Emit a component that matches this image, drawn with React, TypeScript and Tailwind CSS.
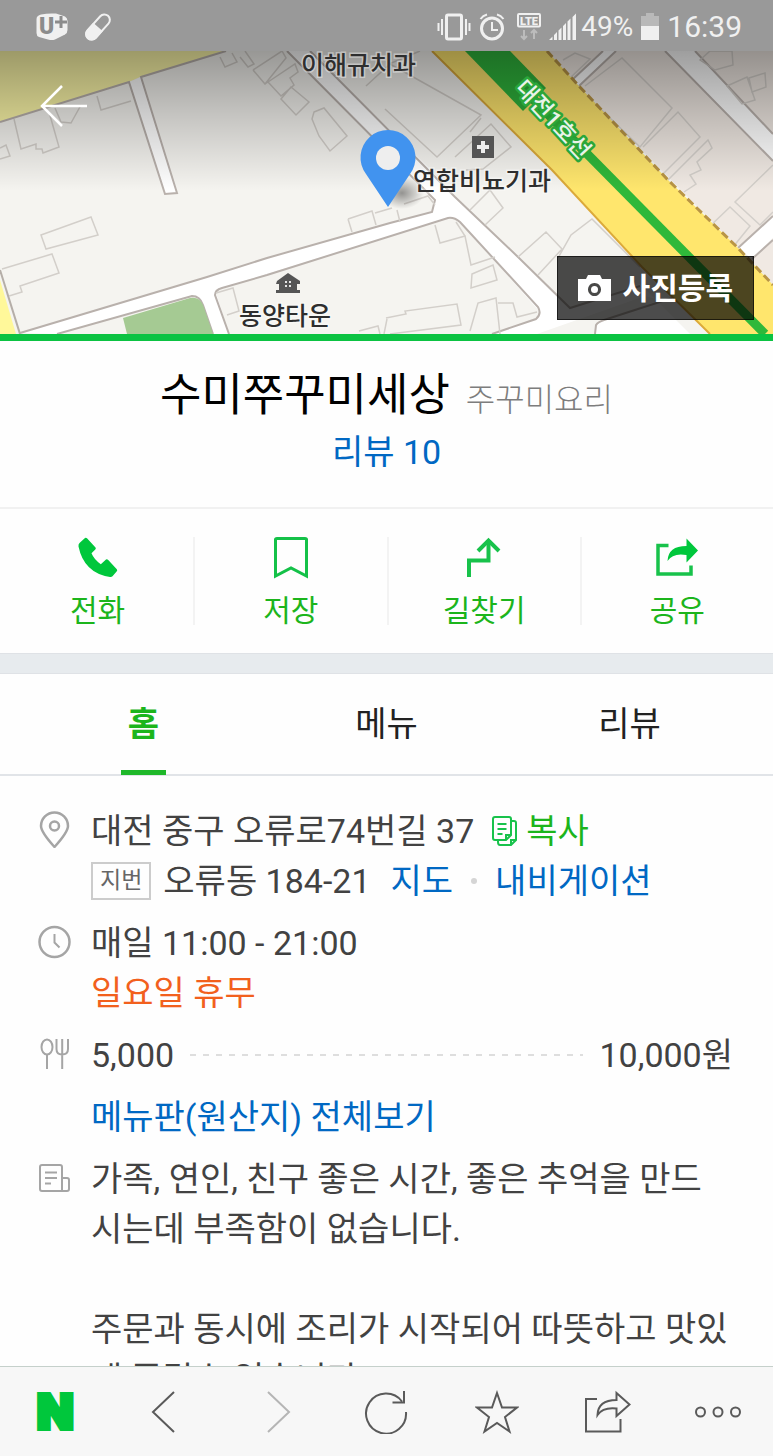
import { useState } from "react";

const actions = [
    { label: "전화", icon: <PhoneIcon /> },
    { label: "저장", icon: <BookmarkIcon /> },
    { label: "길찾기", icon: <RouteIcon /> },
    { label: "공유", icon: <ShareIcon /> },
]

const tabs = ["홈", "메뉴", "리뷰"]

function PhoneIcon() {
    return (
        <svg width="42" height="42" viewBox="0 0 42 42" fill="#00c73c" aria-hidden="true">
            <path d="M2.500 6 L8 1 Q9 .2 10 1.200 L18.500 10.500 Q19.300 11.500 18.300 12.500 L14.500 16.300 Q17 22.500 23.800 27.200 L29 22.600 Q30 21.800 31 22.800 L39.800 32.200 Q40.700 33.200 39.800 34.200 L35.500 39.300 Q34.500 40.300 33 40 Q7 36 1.500 9.500 Q1.200 7 2.500 6Z" />
        </svg>
    )
}

function BookmarkIcon() {
    return (
        <svg width="42" height="44" viewBox="0 0 42 44" fill="none" stroke="#14c148" strokeWidth="3" aria-hidden="true">
            <path d="M5.500 39 V2.500 Q5.500 1.500 7 1.500 H35 Q36.500 1.500 36.500 2.500 V39 L21 31Z" />
        </svg>
    )
}

function RouteIcon() {
    return (
        <svg width="42" height="42" viewBox="0 0 42 42" fill="none" stroke="#18c24b" strokeWidth="4" aria-hidden="true">
            <path d="M6 40 V23.500 H25.500 V3" />
            <path d="M15 14 L25.500 3.500 L36 14" />
        </svg>
    )
}

function ShareIcon() {
    return (
        <svg width="44" height="42" viewBox="0 0 44 42" fill="none" aria-hidden="true">
            <path d="M13.500 8.500 H3 V37 H36 V28.500" stroke="#18c24b" strokeWidth="3.500" />
            <path d="M12.500 24 Q13 9 31.500 9 V1.500 L43 13.500 L31.500 25.500 V18 Q18 15.500 12.500 24Z" fill="#00c73c" />
        </svg>
    )
}

function StatusBar() {
    return (
        <header className="flex h-[51px] shrink-0 items-center justify-between bg-[#999] pl-9 pr-[31px] pt-0.5 text-[#f0f0f0]">
            <div className="flex items-center gap-4">
                <svg width="32" height="28" viewBox="0 0 32 28" aria-hidden="true">
                    <path d="M5 1.500 Q12 0 20 .5 L29 3.500 Q31.500 5 31.500 8 V17 Q31.500 20 29 21.500 L19 26.500 Q16 27.500 12 26.500 L3 24 Q.5 23 .5 20 V6 Q.5 2.500 5 1.500Z" fill="#f0f0f0" />
                    <text x="3" y="21" fontSize="23" fontWeight="900" fill="#8c8c8c" fontFamily="Roboto">U</text>
                    <path d="M25 3 V15 M19 9 H31" stroke="#8c8c8c" strokeWidth="3" />
                </svg>
                <svg width="28" height="28" viewBox="0 0 28 28" aria-hidden="true">
                    <g transform="rotate(42 14 14)">
                        <rect x="8.500" y="-1" width="11" height="30" rx="5.500" fill="none" stroke="#f0f0f0" strokeWidth="2" />
                        <path d="M7.500 14 H20.500 V23.500 A6.500 6.500 0 0 1 7.500 23.500Z" fill="#f0f0f0" />
                    </g>
                </svg>
            </div>
            <div className="flex items-center">
                <svg width="34" height="28" viewBox="0 0 34 28" fill="none" stroke="#f0f0f0" aria-hidden="true">
                    <rect x="9.500" y="2" width="15" height="24" rx="1.500" strokeWidth="3" />
                    <path d="M1.500 10 V18 M5 6 V22 M29 6 V22 M32.500 10 V18" strokeWidth="2" />
                </svg>
                <svg className="ml-2" width="26" height="28" viewBox="0 0 26 28" fill="none" stroke="#f0f0f0" strokeWidth="3" aria-hidden="true">
                    <circle cx="13" cy="15.500" r="10.500" />
                    <path d="M13 9 V17 H19" strokeWidth="2" />
                    <path d="M1.500 6 Q4 2.500 8 1.500 M18 1.500 Q22 2.500 24.500 6" strokeWidth="2" />
                </svg>
                <svg className="ml-3" width="24" height="28" viewBox="0 0 24 28" aria-hidden="true">
                    <rect x="1" y="1" width="22" height="12.500" rx="1" fill="none" stroke="#f0f0f0" strokeWidth="2" />
                    <text x="12" y="11.500" textAnchor="middle" fontSize="11" fontWeight="900" fill="#f0f0f0" fontFamily="Roboto">LTE</text>
                    <path d="M7 17 V26 M4 23 L7 26 L10 23 M17 26 V17 M14 20 L17 17 L20 20" stroke="#bcbcbc" strokeWidth="2" fill="none" />
                </svg>
                <svg className="ml-2" width="28" height="28" viewBox="0 0 28 28" fill="#f0f0f0" aria-hidden="true">
                    <path d="M0 27 L3.500 23.500 V27Z M5 22 L8 19 V27 H5Z M9.500 17.500 L12.500 14.500 V27 H9.500Z M14 13 L17 10 V27 H14Z M18.500 8.500 L21.500 5.500 V27 H18.500Z M23.500 4 L27 .5 V27 H23.500Z" />
                </svg>
                <span className="ml-1 text-[28px] leading-8">49%</span>
                <svg className="ml-2" width="18" height="28" viewBox="0 0 18 28" aria-hidden="true">
                    <path d="M5 0 H13 V3 H18 V14 H0 V3 H5Z" fill="#b9b9b9" />
                    <path d="M0 13 H18 V27 H0Z" fill="#f0f0f0" />
                </svg>
                <span className="ml-2 text-[30px] leading-8">16:39</span>
            </div>
        </header>
    )
}

// viewBox starts at 51 so the shapes share the page's coordinates
function MapView() {
    return (
        <div className="relative h-[290px] shrink-0 overflow-hidden border-b-[7px] border-[#0bc342]">
            <svg className="h-full w-full" viewBox="0 51 773 283" preserveAspectRatio="xMidYMid slice" role="img" aria-label="지도">
                <defs>
                    <linearGradient id="shade" x1="0" y1="0" x2="0" y2="1">
                        <stop offset="0" stopColor="#000" stopOpacity="0.38" />
                        <stop offset="0.45" stopColor="#000" stopOpacity="0.2" />
                        <stop offset="1" stopColor="#000" stopOpacity="0" />
                    </linearGradient>
                    <radialGradient id="pinShadow">
                        <stop offset="0" stopColor="#000" stopOpacity="0.4" />
                        <stop offset="1" stopColor="#000" stopOpacity="0" />
                    </radialGradient>
                </defs>
                <rect y="51" width="773" height="283" fill="#f5f4f0" />
                <path d="M547 51 H773 V285 L738 248 L578 85Z" fill="#f0e9e3" />
                <path d="M0 51 H224 L140 77 L129 82 L0 122Z" fill="#fdf8a8" />
                <path d="M0 280 L16 334 H0Z" fill="#fff89a" />
                <path d="M0 270 L20 334" stroke="#b5aea8" strokeWidth="2" />

                {/* roads */}
                <g fill="#fff">
                    <path d="M20 333 L207 277 L267 258 L390 223 L432 212 L435 202 L287 51 H310 L428 167 L455 197 L518 257 L570 308 L640 284 L690 334 H595 L598 323 L660 300 L645 296 L537 334 H492 L537 318 L540 312 L458 220 L448 218 L215 290 L229 334 H213 L200 298 L192 296 L57 334Z" />
                    <path d="M129 82 L141 77 L177 193 L165 194Z" />
                    <path d="M572 80 L603 51 H616 L579 86Z M665 51 L773 161 V134 L695 51Z M738 248 L773 216 V238 L752 259Z" />
                </g>
                <g fill="none" stroke="#b9b1ac" strokeWidth="2">
                    <path d="M0 122 L129 82 L165 194 L177 193 L141 77 L226 51" />
                    <path d="M20 333 L207 277 L267 258 L390 223 L432 212 L435 200 L287 51" />
                    <path d="M310 51 L455 197 L518 257 L570 308 L640 286" />
                    <path d="M57 334 L192 296 Q200 296 203 305 L213 334 M229 334 L215 295 Q215 290 222 288 L267 275 L448 218 Q454 217 460 222 L538 307 Q542 314 536 319 L492 334" />
                    <path d="M595 334 L596 325 Q598 322 604 320 L672 298" />
                    <path d="M572 80 L603 51 M579 86 L616 51 M665 51 L773 161 M695 51 L773 134 M738 248 L773 216 M752 259 L773 240" />
                </g>
                <path d="M123 318 L190 298 Q199 296 203 305 L213 334 H127Z" fill="#a5ca93" />

                {/* building outlines */}
                <g fill="none" stroke="#d3cfca" strokeWidth="1.500">
                    <path d="M97 96 L101 110 L131 101 M55 108 L61 122 L71 123 L81 105 M14 119 L21 149 L36 144 L36 149 L42 149 L43 153 L59 147 L49 112 M0 148 L6 145 L10 156 L0 159" />
                    <path d="M41 235 L91 217 L98 235 L46 249Z M2 269 L52 254 L59 273 L20 286 L22 292 L9 296" />
                    <path d="M220 57 L225 67 L237 62 L232 53 M240 57 L248 67 L254 64 L245 51 M253 70 L282 51 M253 70 L265 84 L286 58 L282 51 M265 84 L295 64 L298 72 L290 78 L294 85 L281 96 L268 82 M281 99 L291 87 L309 102 L296 115Z M314 112 L324 108 L347 136 L330 151 L319 136 L312 119Z" />
                    <path d="M348 219 L372 211 L376 225 M348 219 L352 232 M375 213 L392 208 M404 204 L428 196 L435 205 M397 210 L400 222" />
                    <path d="M366 86 L390 64 L481 115 L437 157 L385 109 M389 64 L420 51 M455 157 L491 124 L511 147 L483 169 L466 170 M481 118 L470 132 M470 210 L490 190 L503 208 L485 225" />
                    <path d="M435 225 L440 243 L465 236 L456 222 M465 236 L471 265 L495 257 M472 274 L493 265 L497 280 L471 288Z M386 318 L406 314 L405 311 L457 304 L461 325 L390 334 M470 331 L478 303 L496 298 L500 334 M498 303 L513 303 L517 317 L537 312 M518 257 L546 232 L562 249 L538 275 M558 258 L571 235 L592 219 L640 267" />
                    <path d="M216 293 L233 288 L239 311 L227 315 M359 331 L378 326 L380 334 M384 334 L387 319" />
                    <path d="M585 86 L622 58 L672 108 L640 147 L583 92 M643 147 L678 112 L700 137 L662 175 M668 180 L708 140 L712 148 L697 162 L701 170 L690 175 L696 184 L684 192 M563 60 L575 53 L590 59 L570 78 M700 60 L710 51 L732 51 L733 65 L715 70Z M727 86 L747 77 L755 100 L742 104Z M749 78 L765 73 L766 87 L752 92Z M773 165 L735 202 L760 225 L773 212 M708 228 L730 207 L750 226 L733 247 M715 235 L735 250" />
                </g>

                {/* subway road */}
                <path d="M432 51 H547 L578 85 L668 180 L738 248 L773 285 V334 H710 L642 267 L552 170Z" fill="#ffe66d" />
                <path d="M432 51 L552 170 L642 267 L710 334" fill="none" stroke="#dcaa3a" strokeWidth="2" />
                <path d="M547 51 L578 85 L668 180 L738 248 L773 285" fill="none" stroke="#b99545" strokeWidth="3" strokeDasharray="8 4" />
                <path d="M465 51 H510 L546 88 L523 111Z" fill="#2fb53c" />
                <path d="M530 96 L765 334" stroke="#2fb83a" strokeWidth="9" />

                <rect y="51" width="773" height="140" fill="url(#shade)" />

                <text transform="translate(514 89) rotate(47)" fontSize="23" fontWeight="500" fill="#e9f3e9" stroke="#2aa63a" strokeWidth="5" paintOrder="stroke" strokeLinejoin="round">대전1호선</text>

                <ellipse cx="402" cy="193" rx="22" ry="16" fill="url(#pinShadow)" />
                <path d="M388 207 L366 174 A27.500 27.500 0 1 1 410 174Z" fill="#4193ef" />
                <circle cx="388" cy="158" r="12" fill="#eee" />

                <g fill="#555">
                    <rect x="472" y="136" width="22" height="22" />
                    <path d="M277 281 L288 273 L300 281 V284 H297 V290 H300 V293 H276 V290 H279 V284 H276Z" />
                </g>
                <path d="M483 141 V153 M477 147 H489" stroke="#eee" strokeWidth="4" />
                <path d="M285 281 H287 V283 H285Z M289 281 H291 V283 H289Z M285 285 H287 V287 H285Z M289 285 H291 V287 H289Z" fill="#e4e4e4" />

                <g fontSize="25" fontWeight="500" fill="#2e2e2e" stroke="#fff" strokeOpacity="0.4" strokeWidth="3" paintOrder="stroke">
                    <text x="301" y="74">이해규치과</text>
                    <text x="413" y="190">연합비뇨기과</text>
                    <text x="239" y="325">동양타운</text>
                </g>
            </svg>
            <button type="button" aria-label="뒤로" className="absolute left-10 top-8">
                <svg width="48" height="44" viewBox="0 0 48 44" fill="none" stroke="#fff" strokeWidth="2.500">
                    <path d="M22 3 L2 23 L22 43 M2 23 H47" />
                </svg>
            </button>
            <button type="button" className="absolute bottom-3.5 right-[19px] flex h-16 items-center gap-3 border border-black/60 bg-black/70 px-5 text-[30px] font-bold text-white">
                <svg width="33" height="28" viewBox="0 0 33 28" fill="#fff" aria-hidden="true">
                    <path fillRule="evenodd" d="M0 5 H8 L10 1 H22 L24 5 H33 V27 H0Z M16.500 9 a6.500 6.500 0 1 0 .01 0Z" />
                    <circle cx="16.500" cy="15.500" r="3.500" />
                </svg>
                사진등록
            </button>
        </div>
    )
}

function Details() {
    return (
        <section className="flex flex-col gap-3 pl-[38px] pr-10 pt-[30px] text-[34px] leading-[50px] text-[#424242]">
            <div className="flex gap-5">
                <svg className="mt-0.5 shrink-0" width="33" height="40" viewBox="0 0 33 40" fill="none" stroke="#a5a5a5" strokeWidth="2.500" aria-hidden="true">
                    <path d="M16.500 39 Q3 24 3 18 A13.500 13.500 0 0 1 30 18 Q30 24 16.500 39Z" />
                    <circle cx="16.500" cy="18" r="4.500" />
                </svg>
                <address className="not-italic">
                    <p className="flex items-center">
                        대전 중구 오류로74번길 37
                        <button type="button" className="ml-[18px] flex items-center gap-2 text-[#1cb51c]">
                            <svg width="26" height="32" viewBox="0 0 26 32" fill="none" stroke="#18c24b" strokeWidth="2" aria-hidden="true">
                                <path d="M3 2 H17 Q19 2 19 4 V20 L14 25 H3 Q1 25 1 23 V4 Q1 2 3 2Z M14 25 V20 H19" />
                                <path d="M19 6 H22 Q24 6 24 8 V25 L19 30 H8 Q6 30 6 27 V25 M19 30 V25 H24" />
                                <path d="M5.500 9 H14.500 M5.500 14 H14.500 M5.500 19 H10.500" />
                            </svg>
                            복사
                        </button>
                    </p>
                    <p className="flex items-center">
                        <span className="mr-3 border-2 border-[#ccc] px-[7px] text-[23px] leading-[34px] text-[#666]">지번</span>
                        오류동 184-21
                        <a href="#map" className="ml-5 text-[#0068c3]">지도</a>
                        <span className="mx-[18px] h-1.5 w-1.5 rounded-full bg-[#d5d5d5]" />
                        <a href="#navi" className="text-[#0068c3]">내비게이션</a>
                    </p>
                </address>
            </div>

            <div className="flex gap-5">
                <svg className="mt-[7px] shrink-0" width="33" height="34" viewBox="0 0 33 34" fill="none" stroke="#a5a5a5" strokeWidth="2.500" aria-hidden="true">
                    <circle cx="16.500" cy="17" r="15" />
                    <path d="M16.500 9 V17.500 L21.500 22.500" strokeWidth="2" />
                </svg>
                <div>
                    <p>매일 11:00 - 21:00</p>
                    <p className="text-[#f2601d]">일요일 휴무</p>
                </div>
            </div>

            <div className="flex gap-5">
                <svg className="mt-[7px] shrink-0" width="33" height="34" viewBox="0 0 33 34" fill="none" stroke="#a5a5a5" strokeWidth="2" aria-hidden="true">
                    <ellipse cx="9" cy="10" rx="5.500" ry="7.500" />
                    <path d="M9 17.500 V32 M18.500 2 V12 Q18.500 17.500 24 17.500 Q30 17.500 30 12 V2 M24.200 2 V32" />
                </svg>
                <div className="flex flex-1 flex-col gap-3">
                    <p className="flex items-center gap-4">
                        5,000
                        <svg className="h-0.5 flex-1" aria-hidden="true">
                            <line x1="0" y1="1" x2="100%" y2="1" stroke="#dedede" strokeWidth="2" strokeDasharray="6 7" />
                        </svg>
                        <span>10,000원</span>
                    </p>
                    <a href="#menu" className="text-[#0068c3]">메뉴판(원산지) 전체보기</a>
                </div>
            </div>

            <div className="flex gap-5">
                <svg className="mt-[7px] shrink-0" width="33" height="34" viewBox="0 0 33 34" fill="none" stroke="#a5a5a5" strokeWidth="2" aria-hidden="true">
                    <path d="M4 4 H22 Q24 4 24 6 V30 H4 Q2 30 2 28 V6 Q2 4 4 4Z M24 17 H29 Q31 17 31 19 V28 Q31 30 29 30 H24" />
                    <path d="M7 11.500 H19 M7 17 H19 M7 22.500 H13" />
                </svg>
                <div className="pr-1">
                    <p>가족, 연인, 친구 좋은 시간, 좋은 추억을 만드시는데 부족함이 없습니다.</p>
                    <br />
                    <p>주문과 동시에 조리가 시작되어 따뜻하고 맛있게 즐길수 있습니다.</p>
                </div>
            </div>
        </section>
    )
}

function BottomBar() {
    return (
        <nav className="grid h-[90px] shrink-0 grid-cols-7 border-t border-[#c5d0cb] bg-[#f7f7f7] text-[#5a5a5a]">
            <a href="#naver" className="flex items-center justify-center font-['Inter'] text-[48px] font-black leading-none text-[#00c73c] [-webkit-text-stroke:4px_#00c73c]">N</a>
            <button type="button" aria-label="이전" className="flex items-center justify-center">
                <svg width="44" height="44" viewBox="0 0 44 44" fill="none" stroke="currentColor" strokeWidth="2">
                    <path d="M30 2 L9 22 L30 42" />
                </svg>
            </button>
            <button type="button" aria-label="다음" className="flex items-center justify-center text-[#b5b5b5]">
                <svg width="44" height="44" viewBox="0 0 44 44" fill="none" stroke="currentColor" strokeWidth="2">
                    <path d="M14 2 L35 22 L14 42" />
                </svg>
            </button>
            <button type="button" aria-label="새로고침" className="flex items-center justify-center">
                <svg width="44" height="44" viewBox="0 0 44 44" fill="none" stroke="currentColor" strokeWidth="2">
                    <path d="M42 22 A20 20 0 1 1 38 11.500 M40 1 V12.500 H28.500" />
                </svg>
            </button>
            <button type="button" aria-label="즐겨찾기" className="flex items-center justify-center">
                <svg width="44" height="44" viewBox="0 0 44 44" fill="none" stroke="currentColor" strokeWidth="2">
                    <path d="M22 3 L27 17.500 H42 L30 27 L34.500 41.500 L22 33 L9.500 41.500 L14 27 L2 17.500 H17Z" />
                </svg>
            </button>
            <button type="button" aria-label="공유하기" className="flex items-center justify-center">
                <svg width="48" height="44" viewBox="0 0 48 44" fill="none" stroke="currentColor" strokeWidth="2">
                    <path d="M14 9 H3 V41.500 H37.500 V29" />
                    <path d="M14.500 25 Q15 10 33.500 10 V3 L46.500 14.500 L33.500 26 V18.500 Q20 17 14.500 25Z" />
                </svg>
            </button>
            <button type="button" aria-label="더보기" className="flex items-center justify-center">
                <svg width="46" height="44" viewBox="0 0 46 44" fill="none" stroke="currentColor" strokeWidth="2">
                    <circle cx="5.500" cy="22" r="4.500" />
                    <circle cx="23" cy="22" r="4.500" />
                    <circle cx="40.500" cy="22" r="4.500" />
                </svg>
            </button>
        </nav>
    )
}

export default function App() {

    const [tab, setTab] = useState("홈")

    return (
        <div className="flex h-screen flex-col bg-[#fefefe] font-['Roboto','Noto_Sans_CJK_KR',sans-serif]">
            <StatusBar />
            <main className="flex-1 overflow-hidden">
                <MapView />

                <div className="border-b-2 border-[#f1f1f1] pb-[30px] pt-6 text-center">
                    <div className="flex h-[62px] items-baseline justify-center gap-4 leading-[62px]">
                        <h1 className="text-[45px] text-black">수미쭈꾸미세상</h1>
                        <span className="text-[32px] font-light text-[#7d7d7d]">주꾸미요리</span>
                    </div>
                    <a href="#review" className="block text-[34px] leading-[50px] text-[#0068c3]">리뷰 10</a>
                </div>

                <div className="grid grid-cols-4 py-7">
                    {actions.map((action) => (
                        <button key={action.label} type="button" className="flex h-[88px] flex-col items-center gap-3 border-l-2 border-[#f3f3f3] text-[30px] leading-9 text-[#1cb51c] first:border-transparent">
                            <span className="flex h-11 shrink-0 items-start">{action.icon}</span>
                            {action.label}
                        </button>
                    ))}
                </div>

                <div className="h-[21px] border-y border-[#dfe2e6] bg-[#e7ebee]" />

                <div role="tablist" className="grid grid-cols-3 border-b-2 border-[#e1e4e8] px-[22px] text-[34px] text-[#222]">
                    {tabs.map((name) => (
                        <button
                            key={name}
                            type="button"
                            role="tab"
                            aria-selected={tab === name}
                            onClick={() => setTab(name)}
                            className={tab === name ? "flex justify-center font-bold text-[#1cb51c]" : "flex justify-center"}
                        >
                            <span className={tab === name ? "-mb-0.5 h-[101px] border-b-[5px] border-[#1fb82a] px-[7px] leading-[100px]" : "leading-[100px]"}>{name}</span>
                        </button>
                    ))}
                </div>

                <Details />
            </main>
            <BottomBar />
        </div>
    )
}
